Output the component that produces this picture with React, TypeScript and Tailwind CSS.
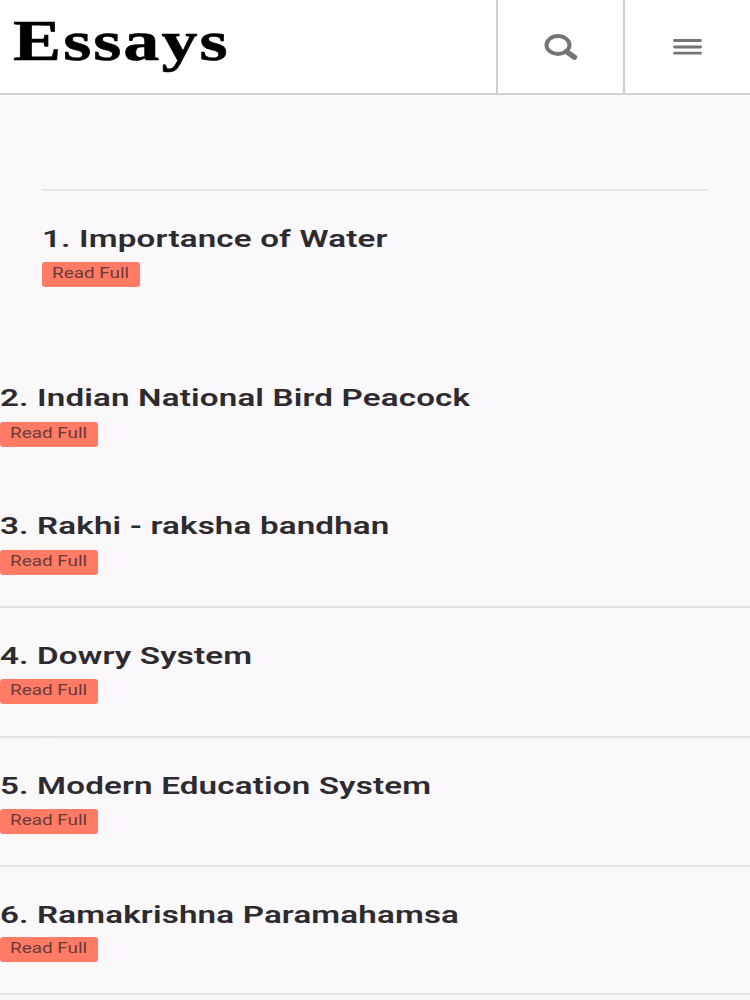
import React from "react";

type Essay = { title: string; box: string; gap: string };

const essays: Essay[] = [
  { title: "1. Importance of Water", box: "mx-[42px] mt-[94px] h-[192px] border-t-2 border-[#e6e5e8] pt-8", gap: "mt-[7px]" },
  { title: "2. Indian National Bird Peacock", box: "h-32 pt-[1px]", gap: "mt-2" },
  { title: "3. Rakhi - raksha bandhan", box: "h-[97px] pt-[1px]", gap: "mt-2" },
  { title: "4. Dowry System", box: "h-[130px] border-t-2 border-[#e2e1e5] pt-8", gap: "mt-[7px]" },
  { title: "5. Modern Education System", box: "h-[129px] border-t-2 border-[#e4e3e7] pt-8", gap: "mt-[7px]" },
  { title: "6. Ramakrishna Paramahamsa", box: "h-32 border-t-2 border-[#e4e3e7] pt-8", gap: "mt-[6px]" },
];

function EssayRow({ title, box, gap }: Essay) {
  return (
    <section className={`shrink-0 ${box}`}>
      <h2 className="h-8 w-max origin-left scale-x-[1.381] whitespace-nowrap text-[24px] leading-8 font-semibold tracking-[0.12px] text-[#2d2b30]">
        {title}
      </h2>
      <a className={`flex h-[25px] w-[98px] rounded-[3px] bg-[#ff7b66] pl-[10px] ${gap}`}>
        <span className="h-[22px] w-max origin-left scale-x-[1.26] whitespace-nowrap text-[15px] leading-[22px] text-[#693b38]">
          Read Full
        </span>
      </a>
    </section>
  );
}

export default function App() {
  return (
    <div className="flex h-[1000px] w-[750px] flex-col overflow-hidden bg-[linear-gradient(to_right,#faf9f7_0px,#faf8fb_60px)] font-['Roboto',sans-serif]">
      <header className="flex h-[95px] shrink-0 border-b-2 border-[#d0cfd1] bg-white">
        <div className="w-[496px] pl-[13px] pt-[8px]">
          <h1 className="w-max origin-left scale-x-[1.266] font-['Liberation_Serif',serif] text-[57px] leading-[66px] font-bold tracking-[1.6px] text-black [-webkit-text-stroke:0.6px_black]">
            Essays
          </h1>
        </div>
        <button aria-label="Search" className="w-[127px] border-l-2 border-[#cfcecf]">
          <svg width="125" height="93" viewBox="0 0 125 93" fill="none" stroke="#777477">
            <ellipse cx="60" cy="45" rx="11.5" ry="8.9" strokeWidth="4" />
            <path d="M68.5 51.6 76.5 57.2" strokeWidth="5.4" strokeLinecap="round" />
          </svg>
        </button>
        <button aria-label="Menu" className="w-[127px] border-l-2 border-[#cfcecf]">
          <svg width="125" height="93" viewBox="0 0 125 93" fill="none" stroke="#777477" strokeWidth="2.8" strokeLinecap="round">
            <path d="M49.5 40.5H75.5M49.5 47H75.5M49.5 53.2H75.5" />
          </svg>
        </button>
      </header>
      <main className="flex flex-col">
        {essays.map((e) => (
          <EssayRow key={e.title} {...e} />
        ))}
        <hr className="border-t-2 border-[#e4e3e7]" />
      </main>
    </div>
  );
}
